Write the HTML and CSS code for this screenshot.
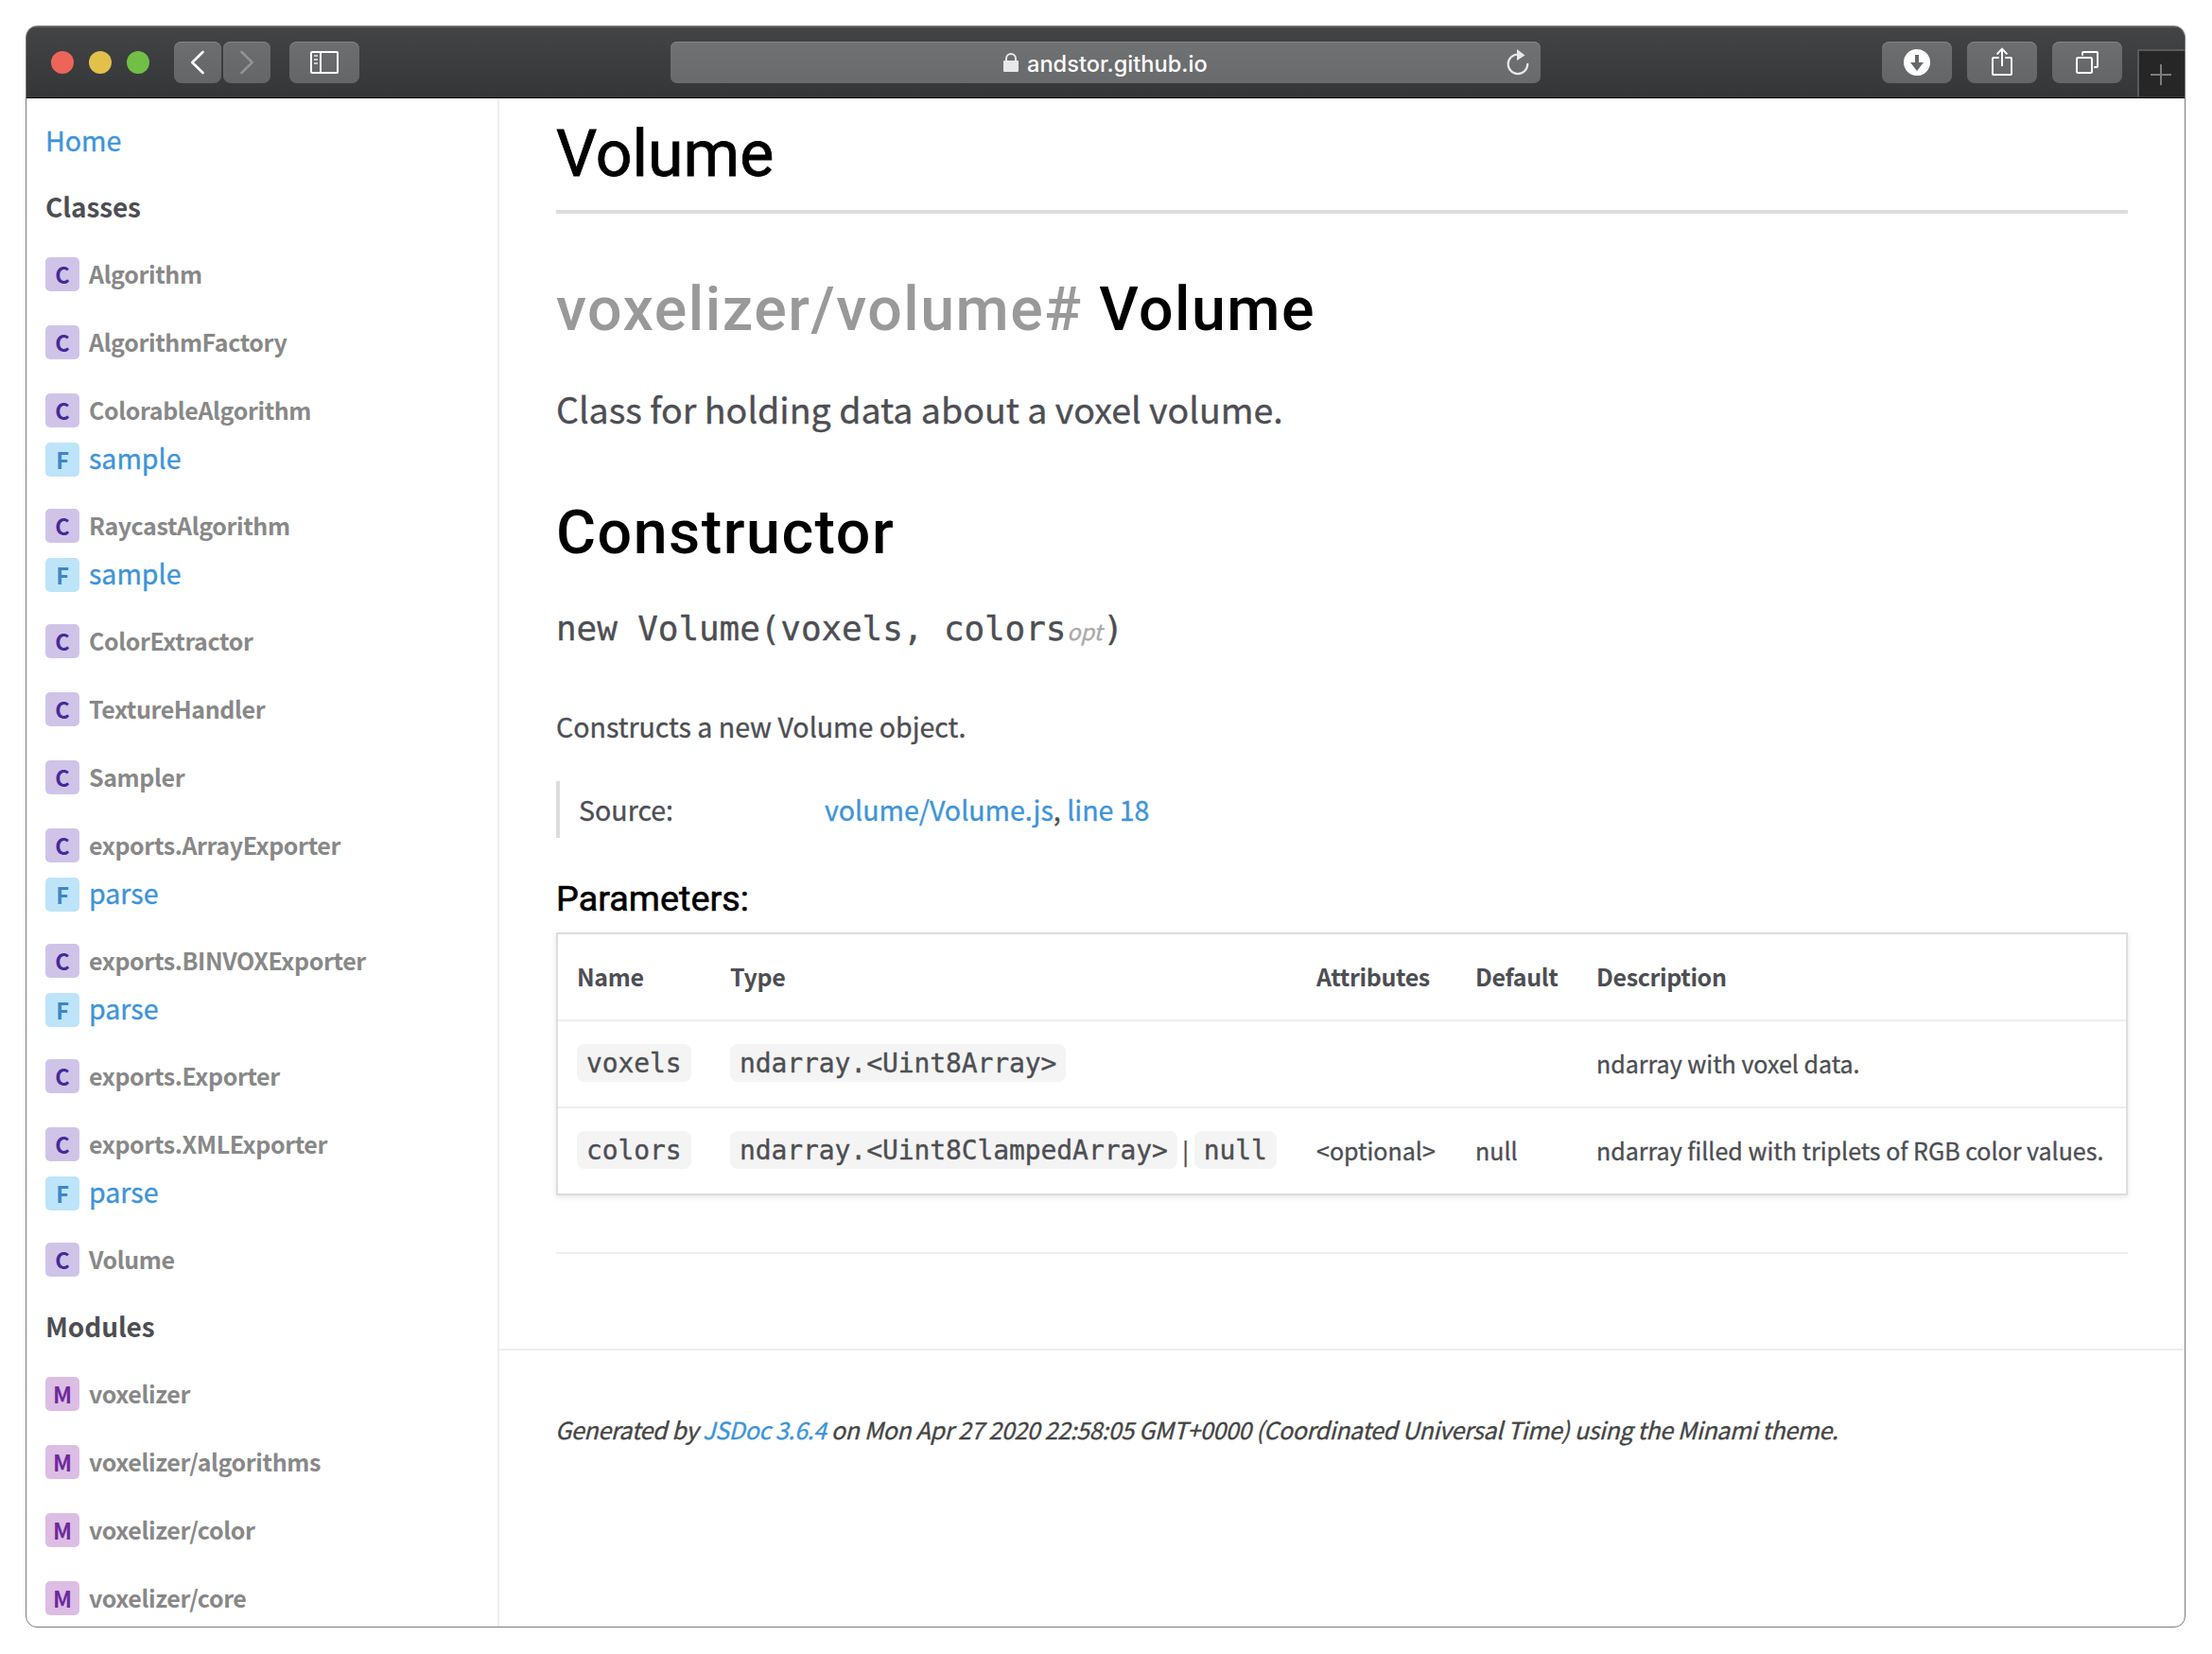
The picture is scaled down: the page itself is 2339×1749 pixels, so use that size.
FILE: index.html
```html
<!DOCTYPE html>
<html lang="en">
<head>
<meta charset="utf-8">
<title>Volume - Documentation</title>
<link rel="stylesheet" href="styles.css">
</head>
<body>
<div class="window">
  <header class="toolbar">
    <div class="lights"><i class="light red"></i><i class="light yellow"></i><i class="light green"></i></div>
    <div class="nav-buttons">
      <div class="btn"><svg width="50" height="44" viewBox="0 0 50 44"><path d="M30.5 11 19.3 22 30.5 33" fill="none" stroke="#fff" stroke-width="2.6" stroke-linecap="round" stroke-linejoin="round"/></svg></div>
      <div class="btn"><svg width="50" height="44" viewBox="0 0 50 44"><path d="M19.5 11 30.7 22 19.5 33" fill="none" stroke="#929294" stroke-width="2.6" stroke-linecap="round" stroke-linejoin="round"/></svg></div>
    </div>
    <div class="btn wide"><svg width="74" height="44" viewBox="0 0 74 44"><g fill="none" stroke="#fff" stroke-width="2"><rect x="23" y="11" width="28" height="22" rx="1"/><path d="M33 11v22"/></g><path d="M26 15h4M26 19h4M26 23h4" stroke="#c8c8c9" stroke-width="2"/></svg></div>
    <div class="address">
      <svg class="lock" width="16" height="20" viewBox="0 0 16 20"><rect y="8" width="16" height="12" rx="1" fill="#e8e8e8"/><path d="M3 9V6a5 5 0 0 1 10 0v3" fill="none" stroke="#e8e8e8" stroke-width="2"/></svg>
      <span>andstor.github.io</span>
      <svg class="reload" width="26" height="30" viewBox="0 0 26 30"><path d="M13 6.5A10.3 10.3 0 1 0 23.3 16.8" fill="none" stroke="#e8e8e8" stroke-width="2.2" stroke-linecap="round"/><path d="M12 1 20.5 7.4 12 13z" fill="#e8e8e8"/></svg>
    </div>
    <div class="actions">
      <div class="btn wide"><svg width="74" height="44" viewBox="0 0 74 44"><circle cx="37" cy="22" r="14" fill="#fff"/><path d="M35 14h4v8h5l-7 9-7-9h5z" fill="#67686a"/></svg></div>
      <div class="btn wide"><svg width="74" height="44" viewBox="0 0 74 44"><g fill="none" stroke="#fff" stroke-width="2"><path d="M33 17h-5a1 1 0 0 0-1 1v16a1 1 0 0 0 1 1h18a1 1 0 0 0 1-1V18a1 1 0 0 0-1-1h-5" stroke-linecap="round"/><path d="M37 26V8M31.6 13.4 37 7.6l5.4 5.8"/></g></svg></div>
      <div class="btn wide"><svg width="74" height="44" viewBox="0 0 74 44"><g fill="none" stroke="#fff" stroke-width="2"><rect x="26" y="17" width="16" height="16" rx="1.5"/><path d="M32 14v-2a1 1 0 0 1 1-1h14a1 1 0 0 1 1 1v14a1 1 0 0 1-1 1h-2" stroke-linecap="round"/></g></svg></div>
    </div>
    <div class="newtab"><svg width="22" height="22" viewBox="0 0 22 22"><path d="M11 0v22M0 11h22" stroke="#7c7c7d" stroke-width="2"/></svg></div>
  </header>
  <div class="page">
    <nav class="sidebar">
      <a class="home">Home</a>
      <h3>Classes</h3>
      <ul>
        <li><div class="row"><b class="badge c">C</b><span>Algorithm</span></div></li>
        <li><div class="row"><b class="badge c">C</b><span>AlgorithmFactory</span></div></li>
        <li><div class="row"><b class="badge c">C</b><span>ColorableAlgorithm</span></div><div class="row sub"><b class="badge f">F</b><a>sample</a></div></li>
        <li><div class="row"><b class="badge c">C</b><span>RaycastAlgorithm</span></div><div class="row sub"><b class="badge f">F</b><a>sample</a></div></li>
        <li><div class="row"><b class="badge c">C</b><span>ColorExtractor</span></div></li>
        <li><div class="row"><b class="badge c">C</b><span>TextureHandler</span></div></li>
        <li><div class="row"><b class="badge c">C</b><span>Sampler</span></div></li>
        <li><div class="row"><b class="badge c">C</b><span>exports.ArrayExporter</span></div><div class="row sub"><b class="badge f">F</b><a>parse</a></div></li>
        <li><div class="row"><b class="badge c">C</b><span>exports.BINVOXExporter</span></div><div class="row sub"><b class="badge f">F</b><a>parse</a></div></li>
        <li><div class="row"><b class="badge c">C</b><span>exports.Exporter</span></div></li>
        <li><div class="row"><b class="badge c">C</b><span>exports.XMLExporter</span></div><div class="row sub"><b class="badge f">F</b><a>parse</a></div></li>
        <li><div class="row"><b class="badge c">C</b><span>Volume</span></div></li>
      </ul>
      <h3 class="next">Modules</h3>
      <ul>
        <li><div class="row"><b class="badge m">M</b><span>voxelizer</span></div></li>
        <li><div class="row"><b class="badge m">M</b><span>voxelizer/algorithms</span></div></li>
        <li><div class="row"><b class="badge m">M</b><span>voxelizer/color</span></div></li>
        <li><div class="row"><b class="badge m">M</b><span>voxelizer/core</span></div></li>
      </ul>
    </nav>
    <div class="content">
      <main>
        <h1>Volume</h1>
        <h2 class="class-name"><span class="prefix">voxelizer/volume#</span> Volume</h2>
        <p class="lead">Class for holding data about a voxel volume.</p>
        <h2 class="section">Constructor</h2>
        <h4 class="signature">new Volume(voxels, colors<span class="opt">opt</span>)</h4>
        <p class="description">Constructs a new Volume object.</p>
        <dl class="details"><dt>Source:</dt><dd><a>volume/Volume.js</a>, <a>line 18</a></dd></dl>
        <h5>Parameters:</h5>
        <table class="params">
          <colgroup><col class="w-name"><col class="w-type"><col class="w-attr"><col class="w-def"><col></colgroup>
          <tr><th>Name</th><th>Type</th><th>Attributes</th><th>Default</th><th>Description</th></tr>
          <tr><td><code>voxels</code></td><td><code>ndarray.&lt;Uint8Array&gt;</code></td><td></td><td></td><td>ndarray with voxel data.</td></tr>
          <tr><td><code>colors</code></td><td><div class="types"><code>ndarray.&lt;Uint8ClampedArray&gt;</code><span class="bar">|</span><code>null</code></div></td><td>&lt;optional&gt;</td><td>null</td><td>ndarray filled with triplets of RGB color values.</td></tr>
        </table>
        <hr>
      </main>
      <footer>Generated by <a>JSDoc 3.6.4</a> on Mon Apr 27 2020 22:58:05 GMT+0000 (Coordinated Universal Time) using the Minami theme.</footer>
    </div>
  </div>
</div>
</body>
</html>
```
FILE: styles.css
```css
* { box-sizing: border-box; margin: 0; padding: 0; }
body {
  background: #fff;
  padding: 27px;
  height: 1749px;
  overflow: hidden;
  color: #4d4e53;
  font: 28.55px/44px "Noto Sans CJK SC", "Noto Sans", sans-serif;
  -webkit-text-stroke: 0.35px;
}
a { color: #3d94d9; text-decoration: none; }
ul { list-style: none; }
svg { display: block; }
.window {
  width: 2284px;
  height: 1694px;
  border: 1px solid #7b7b7c;
  border-radius: 12px;
  background: #fff;
  overflow: hidden;
}

/* Browser toolbar */
.toolbar {
  height: 76px;
  display: flex;
  align-items: flex-start;
  padding: 16px 0 0 26px;
  background: linear-gradient(#434446, #353638);
  border-bottom: 1px solid #000;
  box-shadow: inset 0 1px 0 #606163;
}
.lights { display: flex; gap: 16px; padding-top: 10px; width: 130px; }
.light { width: 24px; height: 24px; border-radius: 50%; }
.red { background: #ed6559; }
.yellow { background: #e1c04c; }
.green { background: #72be47; }
.nav-buttons { display: flex; gap: 2px; margin-right: 20px; }
.btn {
  width: 50px;
  height: 44px;
  border-radius: 8px;
  background: linear-gradient(#6d6e70, #646567);
  box-shadow: inset 0 1px 0 #858587;
}
.wide { width: 74px; }
.address {
  width: 920px;
  height: 44px;
  margin-left: 329px;
  border-radius: 7px;
  background: linear-gradient(#707173, #696a6b);
  box-shadow: inset 0 1px 0 #878789;
  display: flex;
  align-items: center;
  color: #fff;
  font: 500 23.6px/44px Inter, sans-serif;
  -webkit-text-stroke: 0;
}
.lock { margin: 0 9px 0 352px; }
.address span { padding-top: 3px; }
.reload { margin-left: auto; margin-right: 11px; }
.actions { display: flex; gap: 16px; margin-left: 361px; }
.newtab {
  width: 50px;
  height: 50px;
  margin: 8px 0 0 16px;
  border: solid #59595b;
  border-width: 2px 0 0 2px;
  background: #262627;
  padding: 14px 0 0 12px;
}

/* Page layout */
.page { display: flex; height: 1616px; }
.sidebar { width: 500px; border-right: 2px solid #eee; padding: 22px 0 0 20px; overflow: hidden; }
.content { flex: 1; }

.home { display: block; }
h3 { font-size: 28px; line-height: 44px; font-weight: 700; letter-spacing: -0.1px; margin: 26px 0 32px; -webkit-text-stroke: 0; }
.next { margin-top: 30px; }
li + li { margin-top: 36px; }
li:has(.sub) + li { margin-top: 34px; }
.row { display: flex; align-items: center; height: 36px; gap: 10px; }
.row span { color: #888; font-weight: 700; font-size: 25px; letter-spacing: -0.39px; padding-bottom: 2px; -webkit-text-stroke: 0; }
.row a { padding-bottom: 5px; }
.sub { margin-top: 16px; }
.badge {
  width: 36px;
  height: 36px;
  border-radius: 5px;
  text-align: center;
  font-size: 23.5px;
  line-height: 36px;
  -webkit-text-stroke: 0;
}
.c { background: #cfc4e8; color: #45299b; }
.f { background: #bde4f9; color: #3d85c6; }
.m { background: #dcbde4; color: #6d2a9d; }

/* Documentation */
main { padding: 19px 60px 0; }
h1, h2, h5 { color: #000; font-family: Roboto, sans-serif; }
h1 { font-size: 68px; line-height: 80px; font-weight: 400; padding-bottom: 19px; border-bottom: 4px solid #ddd; -webkit-text-stroke: 0.8px; }
h2 { font-size: 64.5px; line-height: 76px; font-weight: 500; letter-spacing: 1.5px; -webkit-text-stroke: 0; }
.class-name { margin-top: 63px; }
.prefix { color: #999; }
.lead { font-size: 37.55px; line-height: 56px; margin-top: 39px; }
.section { margin-top: 65px; }
.signature { font: 400 36px/50px "DejaVu Sans Mono", monospace; letter-spacing: -0.1px; height: 50px; margin-top: 39px; }
.opt { font: italic 400 23.5px/1 "Noto Sans CJK SC", sans-serif; color: #aaa; margin: 0 1px; }
.description { margin-top: 56px; }
.details { display: flex; margin-top: 36px; height: 60px; line-height: 60px; border-left: 4px solid #ddd; padding-left: 20px; }
dt { width: 260px; }
h5 { font-size: 37.8px; line-height: 46px; font-weight: 400; margin-top: 41px; -webkit-text-stroke: 0.6px; }

.params {
  width: 1662px;
  margin-top: 13px;
  border: 2px solid #ddd;
  border-spacing: 0;
  table-layout: fixed;
  box-shadow: 0 2px 6px rgba(0, 0, 0, 0.1);
  font-size: 25px;
  line-height: 40px;
}
.w-name { width: 162px; }
.w-type { width: 620px; }
.w-attr { width: 168px; }
.w-def { width: 128px; }
th, td { height: 92px; padding: 0 0 2px 20px; text-align: left; vertical-align: middle; border-bottom: 2px solid #eee; white-space: nowrap; }
th { font-weight: 700; letter-spacing: -0.37px; -webkit-text-stroke: 0; }
tr:last-child td { border-bottom: 0; height: 90px; }
code {
  display: block;
  width: max-content;
  height: 40px;
  padding: 0 10px;
  border-radius: 8px;
  background: #f4f4f4;
  font: 28px/42px "DejaVu Sans Mono", monospace;
  letter-spacing: -0.09px;
}
.types { display: flex; }
.bar { width: 18px; text-align: center; }
hr { border: 0; border-top: 2px solid #eee; margin-top: 60px; }
footer {
  margin-top: 100px;
  border-top: 2px solid #eee;
  padding: 63px 0 0 59px;
  font-size: 25px;
  line-height: 40px;
  font-style: italic;
  letter-spacing: -0.37px;
  color: #444;
}
```
